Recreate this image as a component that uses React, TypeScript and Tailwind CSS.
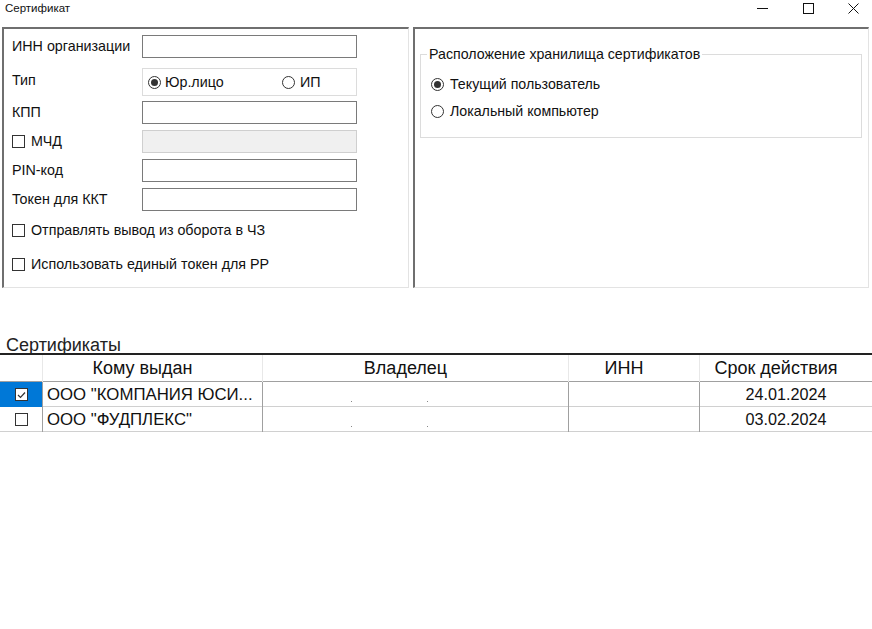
import React from "react";

const font = { fontFamily: '"Liberation Sans", Arial, sans-serif' };

function Radio({ checked }: { checked?: boolean }) {
  return (
    <span className="inline-flex h-[13px] w-[13px] shrink-0 items-center justify-center rounded-full border border-[#333] bg-white">
      {checked && <span className="h-[7px] w-[7px] rounded-full bg-[#333]" />}
    </span>
  );
}

function Check({ checked }: { checked?: boolean }) {
  return (
    <span className="inline-flex h-[13px] w-[13px] shrink-0 items-center justify-center border border-[#333] bg-white">
      {checked && (
        <svg width="9" height="8" viewBox="0 0 9 8">
          <path d="M1 4 L3.5 6.5 L8 1.5" fill="none" stroke="#333" strokeWidth="1.2" />
        </svg>
      )}
    </span>
  );
}

function Input({ disabled }: { disabled?: boolean }) {
  return (
    <div
      className={
        "h-[23px] w-[215px] border " +
        (disabled ? "border-[#cfcfcf] bg-[#f0f0f0]" : "border-[#7a7a7a] bg-white")
      }
    />
  );
}

export default function App() {
  return (
    <div className="relative h-[629px] w-[872px] overflow-hidden bg-white text-[#111]" style={font}>
      {/* Title bar */}
      <div className="flex h-[27px] items-start">
        <div className="pl-[5px] pt-[1px] text-[11.5px] leading-[14px]">Сертификат</div>
        <div className="ml-auto flex items-center pr-[13px] pt-[3px]">
          <svg width="11" height="11" viewBox="0 0 11 11" className="mr-[35px]">
            <path d="M0 5.5 H11" stroke="#111" strokeWidth="1" />
          </svg>
          <svg width="11" height="11" viewBox="0 0 11 11" className="mr-[34px]">
            <rect x="0.5" y="0.5" width="10" height="10" fill="none" stroke="#111" strokeWidth="1" />
          </svg>
          <svg width="11" height="11" viewBox="0 0 11 11">
            <path d="M0.5 0.5 L10.5 10.5 M10.5 0.5 L0.5 10.5" stroke="#111" strokeWidth="1" />
          </svg>
        </div>
      </div>

      {/* Panels */}
      <div className="flex h-[261px] gap-[4px] pl-[2px]">
        {/* Left panel */}
        <div className="relative h-[261px] w-[407px] border-b border-l-2 border-r border-t-2 border-b-[#e3e3e3] border-l-[#6f6f6f] border-r-[#e3e3e3] border-t-[#6f6f6f] text-[14.3px] leading-[17px]">
          <div className="flex flex-col pl-[8px] pt-[6px]">
            <div className="flex h-[23px] items-center">
              <span className="w-[130px]">ИНН организации</span>
              <Input />
            </div>
            <div className="mt-[10px] flex h-[28px] items-start">
              <span className="w-[130px] pt-[4px]">Тип</span>
              <div className="flex h-[28px] w-[215px] items-center border border-[#dcdcdc] pl-[5px]">
                <Radio checked />
                <span className="ml-[4px] w-[117px]">Юр.лицо</span>
                <Radio />
                <span className="ml-[5px]">ИП</span>
              </div>
            </div>
            <div className="mt-[5px] flex h-[23px] items-center">
              <span className="w-[130px]">КПП</span>
              <Input />
            </div>
            <div className="mt-[6px] flex h-[23px] items-center">
              <span className="flex w-[130px] items-center">
                <Check />
                <span className="ml-[6px]">МЧД</span>
              </span>
              <Input disabled />
            </div>
            <div className="mt-[6px] flex h-[23px] items-center">
              <span className="w-[130px]">PIN-код</span>
              <Input />
            </div>
            <div className="mt-[6px] flex h-[23px] items-center">
              <span className="w-[130px]">Токен для ККТ</span>
              <Input />
            </div>
            <div className="mt-[11px] flex items-center">
              <Check />
              <span className="ml-[6px]">Отправлять вывод из оборота в ЧЗ</span>
            </div>
            <div className="mt-[17px] flex items-center">
              <Check />
              <span className="ml-[6px]">Использовать единый токен для РР</span>
            </div>
          </div>
        </div>

        {/* Right panel */}
        <div className="h-[261px] w-[456px] border-b border-l-2 border-r border-t-2 border-b-[#e3e3e3] border-l-[#6f6f6f] border-r-[#e3e3e3] border-t-[#6f6f6f] pl-[5px] pt-[25px] text-[14.2px] leading-[17px]">
          <div className="relative h-[84px] w-[442px] border border-[#dcdcdc]">
            <span className="absolute -top-[9px] left-[6px] bg-white px-[2px] leading-[16px]">
              Расположение хранилища сертификатов
            </span>
            <div className="flex flex-col pl-[10px] pt-[21px]">
              <div className="flex items-center">
                <Radio checked />
                <span className="ml-[6px]">Текущий пользователь</span>
              </div>
              <div className="mt-[10px] flex items-center">
                <Radio />
                <span className="ml-[6px]">Локальный компьютер</span>
              </div>
            </div>
          </div>
        </div>
      </div>

      {/* Certificates */}
      <div className="mt-[49px] pl-[6px] text-[18px] leading-[16px] text-[#222]">Сертификаты</div>
      <div className="w-[872px] border-t-2 border-[#222]">
        <div className="grid h-[27px] grid-cols-[43px_220px_306px_131px_172px] border-b border-[#a0a0a0] text-[18px]">
          <div className="border-r border-[#e8e8e8]" />
          <div className="flex items-center justify-center border-r border-[#e8e8e8] pr-[20px]">Кому выдан</div>
          <div className="flex items-center justify-center border-r border-[#e8e8e8] pr-[20px]">Владелец</div>
          <div className="flex items-center justify-center border-r border-[#e8e8e8] pr-[20px]">ИНН</div>
          <div className="flex items-center justify-center pr-[20px]">Срок действия</div>
        </div>
        {[
          { name: 'ООО "КОМПАНИЯ ЮСИ...', date: "24.01.2024", checked: true },
          { name: 'ООО "ФУДПЛЕКС"', date: "03.02.2024", checked: false },
        ].map((r, i) => (
          <div
            key={i}
            className="grid h-[25px] grid-cols-[43px_220px_306px_131px_172px] border-b border-[#d0d0d0] text-[16.8px]"
          >
            <div
              className={
                "flex items-center justify-center border-r border-[#a0a0a0] " +
                (r.checked ? "bg-[#0078d7]" : "")
              }
            >
              <Check checked={r.checked} />
            </div>
            <div className="flex items-center border-r border-[#a0a0a0] pl-[4px]">{r.name}</div>
            <div className="relative border-r border-[#a0a0a0]">
              <span className="absolute left-[88px] top-[19px] h-[1px] w-[1px] bg-[#888]" />
              <span className="absolute left-[164px] top-[19px] h-[1px] w-[1px] bg-[#888]" />
            </div>
            <div className="border-r border-[#a0a0a0]" />
            <div className="flex items-center justify-center text-[16.2px]">{r.date}</div>
          </div>
        ))}
      </div>
    </div>
  );
}
